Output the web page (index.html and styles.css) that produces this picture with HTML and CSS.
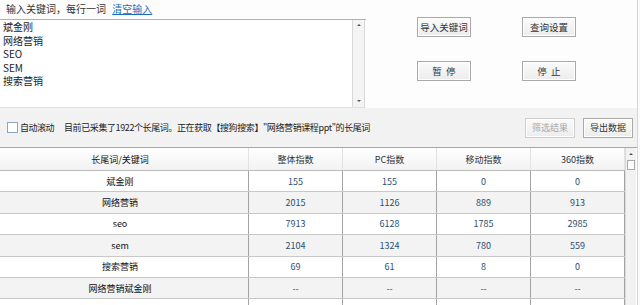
FILE: index.html
```html
<!DOCTYPE html>
<html lang="zh-CN">
<head>
<meta charset="utf-8">
<title>长尾词挖掘</title>
<link rel="stylesheet" href="styles.css">
</head>
<body>
<div class="app">
  <div class="top">
    <div class="left">
      <div class="label">输入关键词，每行一词 <a class="clear" href="#">清空输入</a></div>
      <div class="editor">
        <div class="lines">
          <div>斌金刚</div>
          <div>网络营销</div>
          <div>SEO</div>
          <div>SEM</div>
          <div>搜索营销</div>
        </div>
        <div class="vscroll">
          <span class="arr up"></span>
          <span class="arr down"></span>
        </div>
      </div>
    </div>
    <div class="buttons">
      <button class="btn">导入关键词</button>
      <button class="btn">查询设置</button>
      <button class="btn">暂&nbsp;&nbsp;停</button>
      <button class="btn">停&nbsp;&nbsp;止</button>
    </div>
  </div>
  <div class="bar">
    <span class="check"></span>
    <span class="check-label">自动滚动</span>
    <span class="status">目前已采集了1922个长尾词。正在获取【搜狗搜索】"网络营销课程ppt"的长尾词</span>
    <span class="bar-btns">
      <button class="btn small disabled">筛选结果</button>
      <button class="btn small">导出数据</button>
    </span>
  </div>
  <div class="grid-wrap">
    <div class="grid">
      <div class="row head">
        <div class="cell kw">长尾词/关键词</div>
        <div class="cell">整体指数</div>
        <div class="cell">PC指数</div>
        <div class="cell">移动指数</div>
        <div class="cell">360指数</div>
      </div>
      <div class="row">
        <div class="cell kw">斌金刚</div>
        <div class="cell num">155</div>
        <div class="cell num">155</div>
        <div class="cell num">0</div>
        <div class="cell num">0</div>
      </div>
      <div class="row alt">
        <div class="cell kw">网络营销</div>
        <div class="cell num">2015</div>
        <div class="cell num">1126</div>
        <div class="cell num">889</div>
        <div class="cell num">913</div>
      </div>
      <div class="row">
        <div class="cell kw">seo</div>
        <div class="cell num">7913</div>
        <div class="cell num">6128</div>
        <div class="cell num">1785</div>
        <div class="cell num">2985</div>
      </div>
      <div class="row alt">
        <div class="cell kw">sem</div>
        <div class="cell num">2104</div>
        <div class="cell num">1324</div>
        <div class="cell num">780</div>
        <div class="cell num">559</div>
      </div>
      <div class="row">
        <div class="cell kw">搜索营销</div>
        <div class="cell num">69</div>
        <div class="cell num">61</div>
        <div class="cell num">8</div>
        <div class="cell num">0</div>
      </div>
      <div class="row alt">
        <div class="cell kw">网络营销斌金刚</div>
        <div class="cell num">--</div>
        <div class="cell num">--</div>
        <div class="cell num">--</div>
        <div class="cell num">--</div>
      </div>
      <div class="row">
        <div class="cell kw"></div>
        <div class="cell num"></div>
        <div class="cell num"></div>
        <div class="cell num"></div>
        <div class="cell num"></div>
      </div>
    </div>
    <div class="tscroll">
      <span class="arr up"></span>
      <span class="thumb"></span>
    </div>
  </div>
</div>
</body>
</html>
```

FILE: styles.css
```css
html, body {
  margin: 0;
  padding: 0;
}
body {
  width: 640px;
  height: 305px;
  overflow: hidden;
  background: #fafafa;
  font-family: "Noto Sans CJK SC", "Microsoft YaHei", sans-serif;
  color: #222;
}
.app {
  width: 637px;
  height: 305px;
  border-right: 1px solid #d6d6d6;
  display: flex;
  flex-direction: column;
}
.top {
  display: flex;
  height: 108px;
  background: #fdfdfd;
}
.left {
  width: 366px;
  display: flex;
  flex-direction: column;
}
.label {
  height: 19px;
  line-height: 18px;
  padding-left: 6px;
  font-size: 10px;
  color: #333;
}
.clear {
  margin-left: 4px;
  color: #1a6fb5;
  text-decoration: underline;
}
.editor {
  flex: 1;
  display: flex;
  border-top: 1px solid #a9b3bf;
  border-bottom: 1px solid #e0e0e0;
  background: #fff;
}
.lines {
  flex: 1;
  padding: 0 0 0 3px;
  font-size: 10px;
  line-height: 13.6px;
  color: #222;
}
.vscroll {
  width: 11px;
  margin-right: 1px;
  border-left: 1px solid #d8d8d8;
  border-right: 1px solid #d8d8d8;
  background: #f4f4f4;
  display: flex;
  flex-direction: column;
  justify-content: space-between;
  align-items: center;
  padding: 4px 0 5px;
}
.arr {
  width: 0;
  height: 0;
  border-left: 2px solid transparent;
  border-right: 2px solid transparent;
}
.arr.up {
  border-bottom: 2px solid #555;
}
.arr.down {
  border-top: 2px solid #555;
}
.buttons {
  display: grid;
  grid-template-columns: 54px 54px;
  grid-auto-rows: 20px;
  column-gap: 51px;
  row-gap: 24px;
  margin: 17px 0 0 51px;
  align-content: start;
}
.btn {
  font-family: inherit;
  font-size: 9.5px;
  color: #333;
  padding: 0;
  margin: 0;
  border: 1px solid #a9a9a9;
  background: linear-gradient(#fbfbfb, #ececec);
  box-shadow: inset 0 0 0 1px #fff;
  line-height: 18px;
  white-space: nowrap;
}
.bar {
  height: 39px;
  background: #f2f2f2;
  border-bottom: 1px solid #a8a8a8;
  display: flex;
  align-items: center;
  font-size: 9px;
  color: #222;
}
.check {
  width: 9px;
  height: 9px;
  margin-left: 7px;
  border: 1px solid #8ea4c0;
  background: #fff;
}
.check-label {
  margin-left: 2px;
  letter-spacing: -0.5px;
}
.status {
  margin-left: 10px;
  letter-spacing: -0.4px;
}
.bar-btns {
  margin-left: auto;
  margin-right: 4px;
  display: flex;
  gap: 8px;
}
.btn.small {
  width: 50px;
  height: 20px;
  font-size: 9px;
}
.btn.disabled {
  color: #a8a8a8;
  border-color: #cfcfcf;
}
.grid-wrap {
  flex: 1;
  display: flex;
  background: #fff;
  overflow: hidden;
}
.grid {
  width: 625px;
}
.row {
  display: grid;
  grid-template-columns: 249px 94px 94px 94px 94px;
  height: 21.4px;
  box-sizing: border-box;
  border-bottom: 1px solid #c9c9c9;
  font-size: 9px;
}
.row.head {
  height: 23px;
  background: linear-gradient(#ffffff, #f2f2f2);
  border-bottom: 1px solid #bdbdbd;
  color: #333;
}
.row.alt {
  background: #f3f3f3;
}
.cell {
  display: flex;
  align-items: center;
  justify-content: center;
  border-right: 1px solid #a3a3a3;
}
.row.head .cell {
  border-right: 1px solid #e2e2e2;
}
.cell.kw {
  padding-right: 8px;
  color: #111;
}
.cell.num {
  color: #2c4f6f;
}
.tscroll {
  width: 10px;
  border-left: 1px solid #dadada;
  background: #f2f2f2;
  display: flex;
  flex-direction: column;
  align-items: center;
  padding-top: 5px;
}
.thumb {
  width: 8px;
  height: 10px;
  margin-top: 5px;
  border: 1px solid #a9a9a9;
  background: #fdfdfd;
  box-sizing: border-box;
}
```
